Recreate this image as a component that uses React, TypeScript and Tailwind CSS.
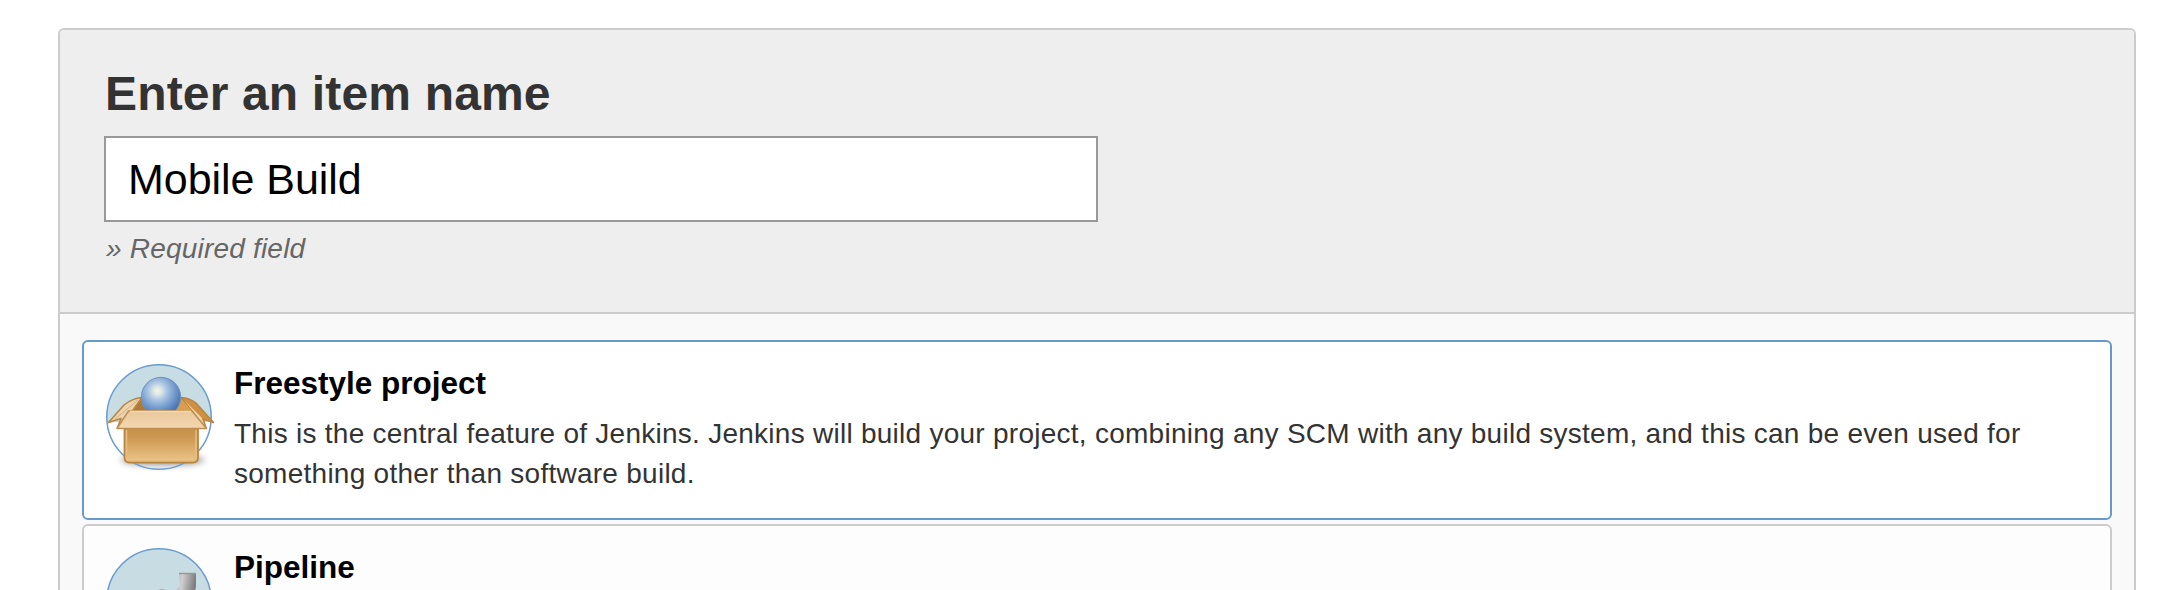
import React from "react";

function BoxIcon() {
  return (
    <svg width="114" height="114" viewBox="102 360 114 114" className="block shrink-0">
      <defs>
        <radialGradient id="ball" gradientUnits="userSpaceOnUse" cx="157.5" cy="391" r="27">
          <stop offset="0" stopColor="#f3f5e2" />
          <stop offset="0.12" stopColor="#e3eae6" />
          <stop offset="0.35" stopColor="#a9c4e2" />
          <stop offset="0.65" stopColor="#7199cb" />
          <stop offset="1" stopColor="#3f69a8" />
        </radialGradient>
        <linearGradient id="front" x1="0" y1="0" x2="0" y2="1">
          <stop offset="0" stopColor="#c48f47" />
          <stop offset="0.3" stopColor="#cd9851" />
          <stop offset="1" stopColor="#ecc68c" />
        </linearGradient>
        <linearGradient id="flap" x1="0" y1="0" x2="0" y2="1">
          <stop offset="0" stopColor="#e9c79c" />
          <stop offset="1" stopColor="#f3d8b2" />
        </linearGradient>
        <filter id="shade" x="-20%" y="-80%" width="140%" height="260%">
          <feGaussianBlur stdDeviation="3" />
        </filter>
        <filter id="soft" x="-5%" y="-5%" width="110%" height="110%">
          <feGaussianBlur stdDeviation="0.6" />
        </filter>
        <clipPath id="upper"><rect x="102" y="360" width="114" height="62" /></clipPath>
        <clipPath id="rim"><rect x="130" y="370" width="70" height="40.5" /></clipPath>
      </defs>
      <circle cx="159" cy="417" r="52.4" fill="#c8dce4" clipPath="url(#upper)" />
      <ellipse cx="162.5" cy="460" rx="42" ry="5.5" fill="#666" opacity="0.65" filter="url(#shade)" />
      <circle cx="159" cy="417" r="52.2" fill="none" stroke="#6a9cd0" strokeWidth="1.5" />
      <g filter="url(#soft)">
        <path d="M131 411 L142 397.5 H181 L193 411Z" fill="#b07a31" />
        <path d="M177 398 H183 L193 411 H176Z" fill="#dc9c49" />
        <path d="M108.5 422.5 L124 405 Q132 398.5 142 397.5 L133 410 L117.5 427.5 L121 418.5Z" fill="#ecd2ae" stroke="#b98642" strokeWidth="1.6" strokeLinejoin="round" />
        <path d="M115 419 L138 400" stroke="#d8b27c" strokeWidth="1" fill="none" />
        <path d="M181 397.5 Q190 398 196 403 L213.5 422.5 L203 419 L206 427.5 L194 412Z" fill="#d0903f" stroke="#b98642" strokeWidth="1.6" strokeLinejoin="round" />
        <path d="M184 400 L193 411 L205 427 L201.5 417.5Z" fill="#f0d5ae" />
        <circle cx="161" cy="397" r="19.7" fill="url(#ball)" stroke="#6d93c6" strokeWidth="1" clipPath="url(#rim)" />
        <path d="M124.5 427 H198 V457.5 Q198 462.5 193 462.5 H129.5 Q124.5 462.5 124.5 457.5Z" fill="url(#front)" stroke="#b98642" strokeWidth="1.8" />
        <path d="M126.5 430 V457 Q126.5 460.5 130 460.5 H192.5 Q196 460.5 196 457 V430" fill="none" stroke="#e8be82" strokeWidth="1.5" />
        <path d="M128.5 411 H192 L206.5 428.5 H117Z" fill="url(#flap)" stroke="#c08f50" strokeWidth="1.5" strokeLinejoin="round" />
        <path d="M130 411.5 H191" stroke="#f1d9b8" strokeWidth="1.5" />
      </g>
    </svg>
  );
}

function PipeIcon() {
  return (
    <svg width="114" height="114" viewBox="102 544 114 114" className="block shrink-0">
      <defs>
        <linearGradient id="steel" x1="0" y1="0" x2="1" y2="0.15">
          <stop offset="0" stopColor="#a0a2a3" />
          <stop offset="0.45" stopColor="#cfcfcf" />
          <stop offset="1" stopColor="#7d7d7d" />
        </linearGradient>
        <filter id="softPipe" x="-5%" y="-5%" width="110%" height="110%">
          <feGaussianBlur stdDeviation="0.7" />
        </filter>
      </defs>
      <circle cx="159" cy="601" r="52.2" fill="#c8dce4" stroke="#6a9cd0" strokeWidth="1.5" />
      <g filter="url(#softPipe)">
        <path d="M179 573 H196 V586 Q195.500 592 192 597 H172 Q175 590 180 586Z" fill="url(#steel)" />
        <path d="M179 573.500 H196" stroke="#999" strokeWidth="1.5" />
        <path d="M152 597 Q154 589.500 162 589 Q168 589.500 172 597Z" fill="#a5a8aa" />
      </g>
    </svg>
  );
}

export default function App() {
  return (
    <div className="h-[590px] overflow-hidden bg-white pt-7 pr-8 pl-[58px] font-['Liberation_Sans',Arial,sans-serif]">
      <main className="h-[700px] overflow-hidden rounded-[6px] border-2 border-[#ccc] bg-[#f9f9f9]">
        <header className="h-[284px] border-b-2 border-[#ccc] bg-[#eee] px-11 pt-[34px]">
          <h1 className="h-[72px] pl-px text-[48px] leading-[60px] font-bold tracking-[0.16px] text-[#333]">Enter an item name</h1>
          <input className="block h-[86px] w-[994px] border-2 border-[#999] bg-white px-[22px] pt-px text-[43px] tracking-[-0.05px] text-black" defaultValue="Mobile Build" />
          <p className="mt-[7px] pl-[2px] text-[28px] leading-[40px] tracking-[0.2px] text-[#666] italic">» Required field</p>
        </header>
        <ul className="flex flex-col gap-1 px-[22px] pt-[26px]">
          <li className="flex h-[180px] gap-[18px] rounded-[6px] border-2 border-[#69c] bg-white pt-[18px] pl-[18px]">
            <BoxIcon />
            <div>
              <h2 className="text-[31.5px] leading-[46px] font-bold text-black">Freestyle project</h2>
              <p className="mt-2 w-[1830px] text-[28px] leading-[40px] tracking-[0.26px] text-[#333]">This is the central feature of Jenkins. Jenkins will build your project, combining any SCM with any build system, and this can be even used for something other than software build.</p>
            </div>
          </li>
          <li className="flex h-[180px] gap-[18px] rounded-[6px] border-2 border-[#ccc] bg-[#fdfdfd] pt-[18px] pl-[18px]">
            <PipeIcon />
            <h2 className="text-[31.5px] leading-[46px] font-bold text-black">Pipeline</h2>
          </li>
        </ul>
      </main>
    </div>
  );
}
